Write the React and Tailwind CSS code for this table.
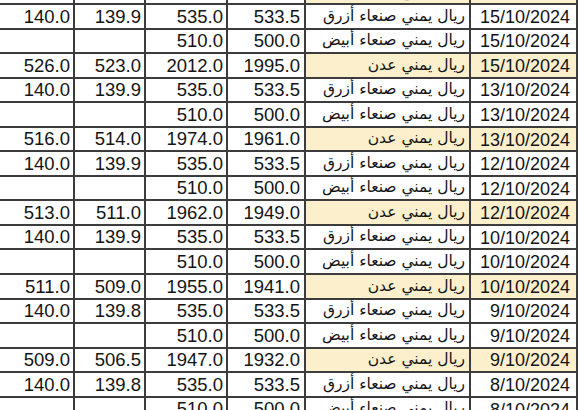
import React from 'react';

const rows = [
  ['517.0', '515.0', '1980.0', '1965.0', 'ريال يمني عدن', '16/10/2024', true],
  ['140.0', '139.9', '535.0', '533.5', 'ريال يمني صنعاء أزرق', '15/10/2024', false],
  ['', '', '510.0', '500.0', 'ريال يمني صنعاء أبيض', '15/10/2024', false],
  ['526.0', '523.0', '2012.0', '1995.0', 'ريال يمني عدن', '15/10/2024', true],
  ['140.0', '139.9', '535.0', '533.5', 'ريال يمني صنعاء أزرق', '13/10/2024', false],
  ['', '', '510.0', '500.0', 'ريال يمني صنعاء أبيض', '13/10/2024', false],
  ['516.0', '514.0', '1974.0', '1961.0', 'ريال يمني عدن', '13/10/2024', true],
  ['140.0', '139.9', '535.0', '533.5', 'ريال يمني صنعاء أزرق', '12/10/2024', false],
  ['', '', '510.0', '500.0', 'ريال يمني صنعاء أبيض', '12/10/2024', false],
  ['513.0', '511.0', '1962.0', '1949.0', 'ريال يمني عدن', '12/10/2024', true],
  ['140.0', '139.9', '535.0', '533.5', 'ريال يمني صنعاء أزرق', '10/10/2024', false],
  ['', '', '510.0', '500.0', 'ريال يمني صنعاء أبيض', '10/10/2024', false],
  ['511.0', '509.0', '1955.0', '1941.0', 'ريال يمني عدن', '10/10/2024', true],
  ['140.0', '139.8', '535.0', '533.5', 'ريال يمني صنعاء أزرق', '9/10/2024', false],
  ['', '', '510.0', '500.0', 'ريال يمني صنعاء أبيض', '9/10/2024', false],
  ['509.0', '506.5', '1947.0', '1932.0', 'ريال يمني عدن', '9/10/2024', true],
  ['140.0', '139.8', '535.0', '533.5', 'ريال يمني صنعاء أزرق', '8/10/2024', false],
  ['', '', '510.0', '500.0', 'ريال يمني صنعاء أبيض', '8/10/2024', false],
];

const Num = ({ children, pad = 'pr-[3px]' }) => (
  <div className={`flex items-center justify-end border-r-2 border-b-2 border-[#3c3c3c] ${pad} pt-[1px]`}>
    {children}
  </div>
);

export default function App() {
  return (
    <div className="w-[583px] h-[410px] overflow-hidden bg-white">
      <div
        className="-mt-[19.56px] grid grid-cols-[75px_71px_82px_78px_165px_107px] auto-rows-[24.56px] text-[18.5px] leading-none text-[#141414]"
        style={{ fontFamily: '"Liberation Sans", Arial, sans-serif' }}
      >
        {rows.map((r, i) => (
          <React.Fragment key={i}>
            <Num>{r[0]}</Num>
            <Num>{r[1]}</Num>
            <Num>{r[2]}</Num>
            <Num pad="pr-[4px]">{r[3]}</Num>
            <div
              dir="rtl"
              className={`flex items-center justify-start border-r-2 border-b-2 border-[#3c3c3c] pr-[4px] text-[15.5px] ${r[6] ? 'bg-[#fcefcb]' : ''}`}
              style={{ fontFamily: '"DejaVu Sans", "Noto Sans", sans-serif' }}
            >
              {r[4]}
            </div>
            <div
              className={`flex items-center justify-end border-r-2 border-b-2 border-[#3c3c3c] pr-[6px] pt-[1px] text-[18px] ${r[6] ? 'bg-[#fcefcb]' : ''}`}
            >
              {r[5]}
            </div>
          </React.Fragment>
        ))}
      </div>
    </div>
  );
}
